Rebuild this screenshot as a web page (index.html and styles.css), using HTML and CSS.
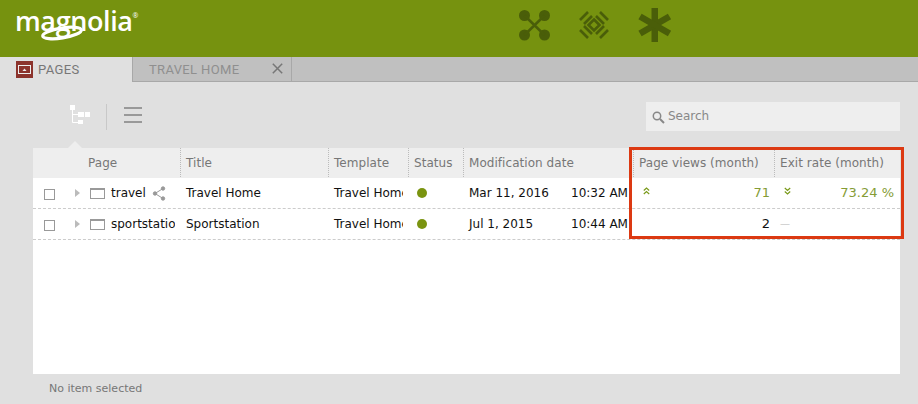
FILE: index.html
```html
<!DOCTYPE html>
<html lang="en">
<head>
    <meta charset="UTF-8">
    <title>Pages</title>
    <link rel="stylesheet" href="styles.css">
</head>
<body>
    <!-- Green top bar -->
    <header class="topbar">
        <div class="logo">
            <span>ma</span><span class="logo-g">g</span><span>nolia</span><sup class="logo-r">®</sup>
            <svg class="logo-swash" width="44" height="16" viewBox="0 0 44 16"><ellipse cx="22" cy="8" rx="19.500" ry="5" fill="none" stroke="#fff" stroke-width="3.200" transform="rotate(-9 22 8)"/></svg>
        </div>
        <nav class="apps">
            <svg width="34" height="34" viewBox="0 0 34 34" fill="#4a5e09"><circle cx="6.500" cy="8.500" r="5.500"/><circle cx="26.500" cy="8.500" r="5.500"/><circle cx="6.500" cy="28" r="5.500"/><circle cx="26.500" cy="28" r="5.500"/><path d="M6.500 8.500 26.500 28M26.500 8.500 6.500 28" stroke="#4a5e09" stroke-width="2.500"/></svg>
            <svg width="34" height="36" viewBox="0 0 34 36" fill="none" stroke="#4a5e09" stroke-width="2.600"><path d="M17 12.500 22.500 18 17 23.500 11.500 18Z"/><path d="M11 5 3 13M15 9 7 17M23 5 31 13M19 9 27 17M11 31 3 23M15 27 7 19M23 31 31 23M19 27 27 19"/></svg>
            <svg class="app-star" width="34" height="36" viewBox="0 0 34 36" fill="#4a5e09"><rect x="13.500" y="1" width="6.500" height="34"/><rect x="13.500" y="1" width="6.500" height="34" transform="rotate(60 16.750 18)"/><rect x="13.500" y="1" width="6.500" height="34" transform="rotate(-60 16.750 18)"/></svg>
        </nav>
    </header>

    <!-- Tabs -->
    <div class="tabs">
        <div class="tab tab-active">
            <span class="tab-icon"><svg width="17" height="17" viewBox="0 0 17 17"><rect width="17" height="17" fill="#8c332c"/><rect x="2.500" y="4.500" width="12" height="8" fill="none" stroke="#eee" stroke-width="1"/><path d="M6.500 10 8.500 7.500 10.500 10Z" fill="#eee"/></svg></span>
            PAGES
        </div>
        <div class="tab tab-other">
            TRAVEL HOME
            <svg class="tab-close" width="11" height="11" viewBox="0 0 11 11"><path d="M.8.8 10.200 10.200M10.200.8 .8 10.200" stroke="#777" stroke-width="1.500"/></svg>
        </div>
    </div>

    <!-- Toolbar -->
    <div class="toolbar">
        <div class="views">
            <svg class="view-tree" width="22" height="24" viewBox="0 0 22 24"><g fill="#fff"><rect x="0" y="0" width="5" height="5"/><rect x="8" y="7" width="6" height="5"/><rect x="15" y="7" width="5" height="5"/><rect x="8" y="15" width="5" height="4"/></g><path d="M2.500 5V17.500H9M2.500 9.500H9" fill="none" stroke="#fff"/></svg>
            <span class="views-sep"></span>
            <span class="view-list"><i></i><i></i><i></i></span>
        </div>
        <div class="search">
            <svg width="13" height="13" viewBox="0 0 13 13" fill="none" stroke="#888"><circle cx="5" cy="5" r="3.700" stroke-width="1.500"/><path d="M8 8 12 12" stroke-width="2"/></svg>
            Search
        </div>
    </div>

    <!-- Page list -->
    <main class="panel">
        <div class="tree-notch"></div>
        <div class="row head">
            <div class="cell c-page">Page</div>
            <div class="cell">Title</div>
            <div class="cell">Template</div>
            <div class="cell">Status</div>
            <div class="cell">Modification date</div>
            <div class="cell">Page views (month)</div>
            <div class="cell">Exit rate (month)</div>
        </div>
        <div class="row item">
            <div class="cell c-name">
                <span class="check"></span>
                <span class="arrow"></span>
                <span class="page-icon"></span>
                <span class="name">travel</span>
                <svg class="share" width="14" height="15" viewBox="0 0 14 15" fill="#999" stroke="#999"><path d="M11 2.500 3 7.500 11 12.500" fill="none"/><circle cx="11" cy="2.500" r="1.700"/><circle cx="3" cy="7.500" r="1.700"/><circle cx="11" cy="12.500" r="1.700"/></svg>
            </div>
            <div class="cell">Travel Home</div>
            <div class="cell clip">Travel Home</div>
            <div class="cell"><span class="dot"></span></div>
            <div class="cell c-date"><span>Mar 11, 2016</span><span>10:32 AM</span></div>
            <div class="cell c-num good">
                <svg width="7" height="8" viewBox="0 0 7 8" fill="none" stroke="#7a9a1a" stroke-width="1.200"><path d="M.8 3.500 3.500 1 6.200 3.500M.8 7 3.500 4.500 6.200 7"/></svg>
                <span>71</span>
            </div>
            <div class="cell c-num c-rate good">
                <svg width="7" height="8" viewBox="0 0 7 8" fill="none" stroke="#7a9a1a" stroke-width="1.200"><path d="M.8 1 3.500 3.500 6.200 1M.8 4.500 3.500 7 6.200 4.500"/></svg>
                <span>73.24 %</span>
            </div>
        </div>
        <div class="row item">
            <div class="cell c-name">
                <span class="check"></span>
                <span class="arrow"></span>
                <span class="page-icon"></span>
                <span class="name name-cut">sportstation</span>
            </div>
            <div class="cell">Sportstation</div>
            <div class="cell clip">Travel Home</div>
            <div class="cell"><span class="dot"></span></div>
            <div class="cell c-date"><span>Jul 1, 2015</span><span>10:44 AM</span></div>
            <div class="cell c-num"><i></i><span>2</span></div>
            <div class="cell c-num c-rate"><span class="dash">—</span></div>
        </div>
        <div class="highlight"></div>
    </main>

    <footer class="status">No item selected</footer>
</body>
</html>
```

FILE: styles.css
```css
/* CSS styles */
body {
    margin: 0;
    height: 404px;
    overflow: hidden;
    background-color: #e0e0e0;
    font-family: "DejaVu Sans", sans-serif;
    font-size: 12px;
    color: #111;
}

/* green bar */
.topbar {
    height: 57px;
    background-color: #76920f;
    display: flex;
}

.logo {
    position: relative;
    width: 136px;
    margin-left: 15px;
    padding-top: 4px;
    font-family: "Open Sans", sans-serif;
    font-weight: 600;
    font-size: 27px;
    line-height: 34px;
    letter-spacing: -0.4px;
    color: #fff;
    white-space: nowrap;
}

.logo-r {
    font-size: 7px;
    line-height: 0;
    vertical-align: 13px;
    font-weight: 400;
    letter-spacing: 0;
}

.logo-swash {
    position: absolute;
    left: 25px;
    top: 25px;
}

.apps {
    display: flex;
    gap: 25px;
    margin-left: 367px;
    padding-top: 7px;
}

.app-star {
    margin-left: 2px;
}

/* tabs */
.tabs {
    height: 25px;
    display: flex;
    background-color: #c0c0c0;
    box-sizing: border-box;
    border-bottom: 1px solid #a8a8a8;
    font-family: "Roboto", sans-serif;
    font-size: 13px;
    letter-spacing: 0.35px;
    line-height: 26px;
}

.tab {
    box-sizing: border-box;
    height: 25px;
    display: flex;
}

.tab-active {
    width: 132px;
    background-color: #e0e0e0;
    padding-left: 16px;
    color: #777;
    gap: 5px;
}

.tab-icon {
    height: 17px;
    padding-top: 4px;
}

.tab-other {
    width: 160px;
    padding-left: 16px;
    border-left: 1px solid #a8a8a8;
    border-right: 1px solid #a8a8a8;
    border-bottom: 1px solid #a8a8a8;
    color: #8f8f8f;
    position: relative;
}

.tab-close {
    position: absolute;
    right: 8px;
    top: 6px;
}

/* toolbar */
.toolbar {
    height: 66px;
    display: flex;
    justify-content: space-between;
    padding: 20px 18px 0 70px;
    box-sizing: border-box;
}

.views {
    display: flex;
    align-items: flex-start;
}

.views-sep {
    width: 1px;
    height: 26px;
    margin: 2px 17px 0 14px;
    background-color: #c8c8c8;
}

.view-tree {
    margin-top: 3px;
}

.view-list {
    display: flex;
    flex-direction: column;
    gap: 5px;
    width: 18px;
    margin-top: 5px;
}

.view-list i {
    height: 2px;
    background-color: #999;
}

.search {
    width: 254px;
    height: 29px;
    box-sizing: border-box;
    background-color: #eee;
    color: #888;
    display: flex;
    align-items: center;
    gap: 3px;
    padding: 0 0 2px 6px;
}

.search svg {
    margin-top: 4px;
}

/* table */
.panel {
    position: relative;
    margin-left: 33px;
    width: 867px;
    height: 226px;
    background-color: #fff;
}

.tree-notch {
    position: absolute;
    left: 35px;
    top: -7px;
    border-left: 7px solid transparent;
    border-right: 7px solid transparent;
    border-bottom: 7px solid #eee;
}

.row {
    display: grid;
    grid-template-columns: 147px 148px 80px 55px 170px 141px 126px;
}

.head {
    height: 30px;
    background-color: #eee;
    color: #777;
    line-height: 30px;
    letter-spacing: 0.05px;
}

/* dotted separators between header cells */
.head .cell {
    padding-left: 6px;
    background-image: linear-gradient(#bbb 50%, transparent 50%);
    background-size: 1px 2px;
    background-repeat: repeat-y;
    background-position: left top;
}

.head .c-page {
    padding-left: 55px;
    background-image: none;
}

.item {
    height: 31px;
    box-sizing: border-box;
    border-bottom: 1px dashed #ccc;
    line-height: 30px;
}

.cell {
    white-space: nowrap;
    overflow: hidden;
    min-width: 0;
    padding-left: 6px;
}

.clip {
    width: 69px;
}

.c-name {
    display: flex;
    align-items: center;
    padding-left: 11px;
}

.check {
    width: 9px;
    height: 9px;
    border: 1px solid #999;
    margin-top: 3px;
    flex-shrink: 0;
}

.arrow {
    margin-left: 20px;
    border-left: 5px solid #bbb;
    border-top: 4px solid transparent;
    border-bottom: 4px solid transparent;
    flex-shrink: 0;
}

.page-icon {
    width: 13px;
    height: 8px;
    margin-left: 10px;
    border: 1px solid #999;
    border-top-width: 2px;
    flex-shrink: 0;
}

.name {
    margin-left: 6px;
}

.name-cut {
    width: 64px;
    overflow: hidden;
    flex-shrink: 0;
}

.share {
    margin-left: 6px;
    flex-shrink: 0;
}

.dot {
    display: inline-block;
    width: 10px;
    height: 10px;
    margin-left: 3px;
    border-radius: 50%;
    background-color: #7a9410;
    vertical-align: -1px;
}

.c-date {
    display: flex;
}

.c-date span:first-child {
    width: 102px;
}

.c-num {
    display: flex;
    justify-content: space-between;
    align-items: center;
    padding-right: 4px;
    padding-left: 10px;
    font-size: 13px;
}

.c-rate {
    padding-right: 6px;
}

.c-num svg {
    margin-bottom: 4px;
}

.good {
    color: #859c35;
}

.dash {
    color: #ccc;
    font-size: 10px;
    margin-left: -4px;
}

.highlight {
    position: absolute;
    left: 596px;
    top: -1px;
    width: 275px;
    height: 92px;
    box-sizing: border-box;
    border: 3px solid #dc3912;
}

.status {
    padding-left: 49px;
    font-size: 11px;
    line-height: 29px;
    color: #777;
}
```
